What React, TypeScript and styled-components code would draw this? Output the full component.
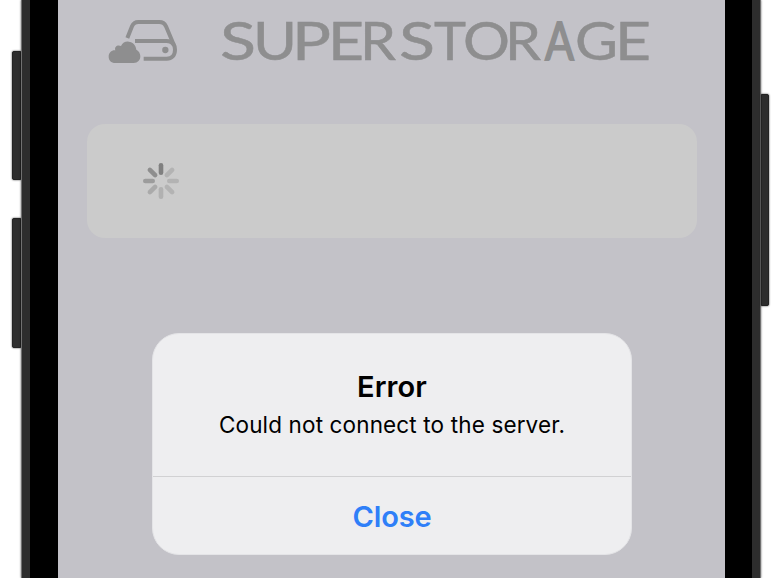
import React from "react";
import styled, { createGlobalStyle } from "styled-components";

const GlobalStyle = createGlobalStyle`
  *, *::before, *::after { box-sizing: border-box; }
  body { margin: 0; background: #fff; overflow: hidden; font-family: Inter, "Liberation Sans", sans-serif; }
`;

const Phone = styled.main`
  display: flex;
  width: 782px;
  height: 578px;
  overflow: hidden;
  background: #fff;
`;

const ButtonRail = styled.div<{ $side: "left" | "right" }>`
  display: flex;
  flex-direction: column;
  flex: none;
  width: 21px;
  gap: 38px;
  padding-top: ${(p) => (p.$side === "left" ? 51 : 94)}px;
  align-items: ${(p) => (p.$side === "left" ? "flex-end" : "flex-start")};
`;

const HardwareButton = styled.div<{ $height: number; $side: "left" | "right" }>`
  width: ${(p) => (p.$side === "left" ? 9 : 8)}px;
  height: ${(p) => p.$height}px;
  background: #2d2d2d;
  border: 1px solid #232323;
  border-radius: ${(p) => (p.$side === "left" ? "2px 0 0 2px" : "0 2px 2px 0")};
  box-shadow: 0 0 2px rgba(0, 0, 0, 0.8);
`;

const Frame = styled.div<{ $side: "left" | "right" }>`
  flex: none;
  width: 9px;
  background: #2d2d2d;
  border-${(p) => p.$side}: 1px solid #707070;
  box-shadow: 0 0 2px rgba(0, 0, 0, 0.6);
`;

const Bezel = styled.div<{ $width: number }>`
  flex: none;
  width: ${(p) => p.$width}px;
  background: #000;
  z-index: 1;
`;

const Screen = styled.section`
  display: flex;
  flex-direction: column;
  flex: none;
  width: 667px;
  background: #c3c2c8;
`;

const Brand = styled.header`
  display: flex;
  gap: 20px;
  height: 124px;
  padding-left: 42px;
  svg { flex: none; display: block; }
`;

const DriveGlyph = styled.svg`
  width: 90px;
  height: 60px;
  margin-top: 10px;
`;

const Wordmark = styled.text`
  font-family: Lato, sans-serif;
  font-size: 53px;
  font-weight: 400;
  fill: #8e8e8f;
  stroke: #8e8e8f;
`;

const Letter = styled.tspan<{ $narrow: boolean }>`
  stroke-width: ${(p) => (p.$narrow ? 1.8 : 0.5)}px;
`;

const LoadingCard = styled.div`
  display: flex;
  align-items: center;
  height: 114px;
  margin: 0 28px 0 29px;
  padding-left: 55px;
  border-radius: 18px;
  background: #cbcbcb;
`;

const Dialog = styled.div`
  display: flex;
  flex-direction: column;
  width: 480px;
  height: 222px;
  margin: 95px 0 0 94px;
  border-radius: 27px;
  border: 1px solid #e4e4e7;
  background: #eeeef0;
  text-align: center;
  overflow: hidden;
`;

const DialogBody = styled.div`
  height: 143px;
  padding-top: 35px;
  border-bottom: 1px solid #d1d1d3;
`;

const Title = styled.h1`
  margin: 0;
  font-size: 29px;
  line-height: 36px;
  font-weight: 600;
  letter-spacing: 0.1px;
  color: #000;
`;

const Message = styled.p`
  margin: 4px 0 0;
  font-size: 22.5px;
  line-height: 32px;
  letter-spacing: 0.14px;
  color: #000;
`;

const CloseButton = styled.button`
  flex: 1;
  border: 0;
  padding: 1px 0 0;
  background: transparent;
  font: 600 29px Inter, sans-serif;
  letter-spacing: -0.1px;
  color: #2f7ff8;
`;

const letters: [string, number, number][] = [
  ["S", 10, 36],
  ["U", 43, 44],
  ["P", 82, 39],
  ["E", 118, 36],
  ["R", 150, 36],
  ["S", 189, 36],
  ["T", 224, 32],
  ["O", 253, 47],
  ["R", 295, 36],
  ["A", 335, 29],
  ["G", 365, 43],
  ["E", 405, 36],
];

const BrandName = () => (
  <svg width="450" height="80" role="img" aria-label="SUPERSTORAGE">
    <Wordmark y="60">
      {letters.map(([letter, x, width], i) => (
        <Letter key={i} $narrow={letter === "A"} x={x} textLength={width} lengthAdjust="spacingAndGlyphs">{letter}</Letter>
      ))}
    </Wordmark>
  </svg>
);

const DriveIcon = () => (
  <DriveGlyph viewBox="0 0 270 180">
    <g fill="none" stroke="#8e8e8f" strokeWidth="12">
      <path d="M82 84 L96 49 Q101 36 115 36 H178 Q192 36 198 49 L220 101 Q225 109 225 119 C225 136 215 146 200 146 H131" />
      <path d="M105 93 H199 Q215 93 222 106" />
    </g>
    <circle cx="196" cy="120" r="9.5" fill="#8e8e8f" />
    <path d="M46 159 C33 159 26 151 26 140 C26 128 35 120 46 121 C42 110 53 103 63 108 C68 98 76 94 86 95 C99 96 108 106 109 119 C117 123 121 131 121 139 C121 151 113 159 101 159 Z" fill="#8e8e8f" />
  </DriveGlyph>
);

const spokes = ["#808080", "#b3b3b3", "#b3b3b3", "#b3b3b3", "#b1b1b1", "#aaaaaa", "#9c9c9c", "#8e8e8e"];

const Spinner = () => (
  <svg width="38" height="38" viewBox="-19 -19 38 38">
    {spokes.map((color, i) => (
      <path key={i} d="M0 -8.3 V-15.7" stroke={color} strokeWidth="4.6" strokeLinecap="round" transform={`rotate(${i * 45})`} />
    ))}
  </svg>
);

export default function App() {
  return (
    <>
      <GlobalStyle />
      <Phone>
        <ButtonRail $side="left">
          <HardwareButton $side="left" $height={129} />
          <HardwareButton $side="left" $height={130} />
        </ButtonRail>
        <Frame $side="left" />
        <Bezel $width={28} />
        <Screen>
          <Brand>
            <DriveIcon />
            <BrandName />
          </Brand>
          <LoadingCard><Spinner /></LoadingCard>
          <Dialog role="alertdialog">
            <DialogBody>
              <Title>Error</Title>
              <Message>Could not connect to the server.</Message>
            </DialogBody>
            <CloseButton>Close</CloseButton>
          </Dialog>
        </Screen>
        <Bezel $width={27} />
        <Frame $side="right" />
        <ButtonRail $side="right">
          <HardwareButton $side="right" $height={212} />
        </ButtonRail>
      </Phone>
    </>
  );
}
